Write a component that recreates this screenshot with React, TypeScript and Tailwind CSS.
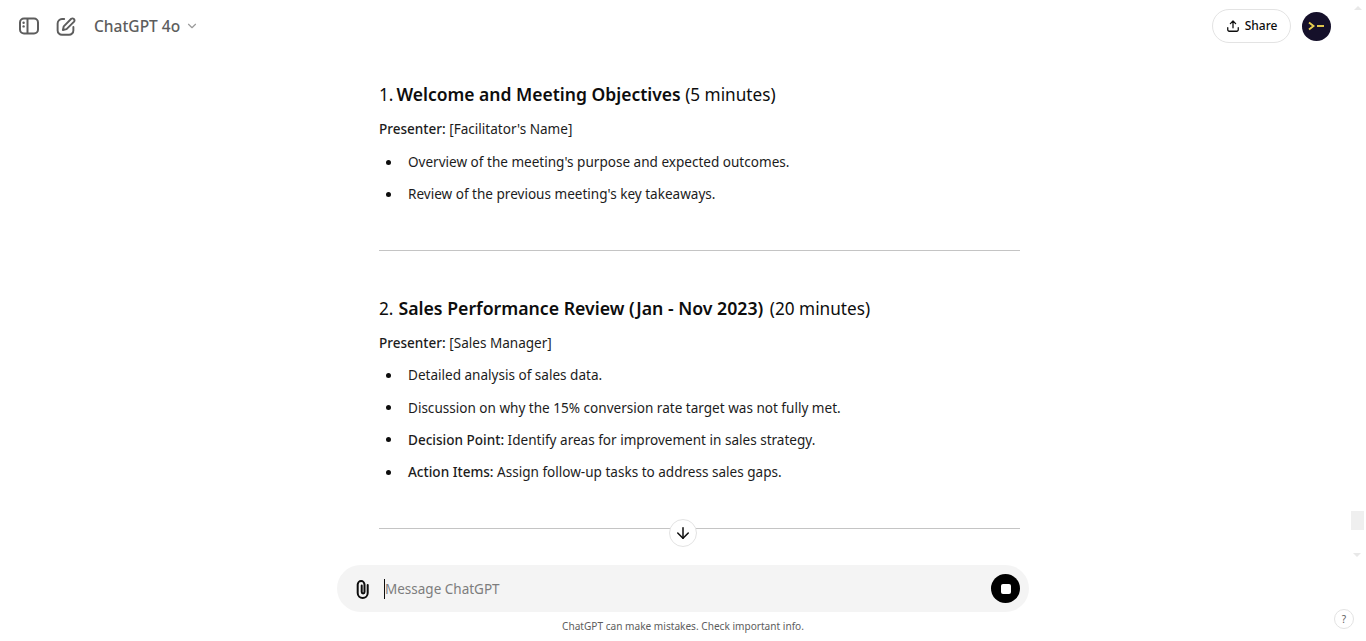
import React from "react";
import { ArrowDown, ChevronDown } from "lucide-react";

const Bullet = ({ children }: { children: React.ReactNode }) => (
  <li className="flex h-[32.3px] items-center">
    <span className="ml-[7px] mr-[17px] h-[5px] w-[5px] rounded-full bg-[#0d0d0d]" />
    <span>{children}</span>
  </li>
);

const SidebarIcon = () => (
  <svg width="24" height="24" viewBox="0 0 24 24" fill="none" stroke="#5d5d5d" strokeWidth="2">
    <rect x="3" y="4.5" width="18" height="15" rx="4" />
    <path d="M10.5 4.5v15" />
    <circle cx="6.6" cy="8.8" r="1.2" fill="#5d5d5d" stroke="none" />
    <circle cx="6.6" cy="12.4" r="1.2" fill="#5d5d5d" stroke="none" />
  </svg>
);

const ComposeIcon = () => (
  <svg width="21" height="21" viewBox="0 0 24 24" fill="none" stroke="#5d5d5d" strokeWidth="2.2" strokeLinecap="round" strokeLinejoin="round">
    <path d="M10.5 3.5H8a5 5 0 0 0-5 5v8a5 5 0 0 0 5 5h8a5 5 0 0 0 5-5v-4" />
    <path d="M18.6 3.2a2.3 2.3 0 0 1 3.2 3.2l-8.6 8.6-4.2 1 1-4.2z" />
  </svg>
);

const ClipIcon = () => (
  <svg width="24" height="24" viewBox="0 0 24 24" fill="none" stroke="#0d0d0d" strokeWidth="2" strokeLinecap="round" strokeLinejoin="round">
    <path d="M10.7 8.5v6.5a1.4 1.4 0 0 0 2.8 0V7.5a3.4 3.4 0 0 0-6.8 0v8.5a5 5 0 0 0 10 0V8" />
  </svg>
);

const ShareIcon = () => (
  <svg width="14" height="14" viewBox="0 0 24 24" fill="none" stroke="#0d0d0d" strokeWidth="2.2" strokeLinecap="round" strokeLinejoin="round">
    <path d="M12 15V3.5M7.5 8 12 3.5 16.5 8" />
    <path d="M3 15v3.5A2.5 2.5 0 0 0 5.5 21h13a2.5 2.5 0 0 0 2.5-2.5V15" />
  </svg>
);

export default function App() {
  return (
    <div className="relative flex h-[641px] flex-col overflow-hidden bg-white font-['Noto_Sans',sans-serif] text-[#0d0d0d]">
      {/* top bar */}
      <header className="flex h-[52px] shrink-0 items-center pl-[17px] pr-[35px]">
        <SidebarIcon />
        <span className="ml-[13.5px]"><ComposeIcon /></span>
        <span className="ml-[18.5px] pt-[1px] text-[15.5px] font-medium text-[#5d5d5d]">ChatGPT 4o</span>
        <ChevronDown size={14} className="ml-[5px] text-[#9b9b9b]" />
        <div className="ml-auto flex items-center gap-[11px]">
          <button className="flex h-[34px] w-[79px] items-center justify-center gap-[5px] rounded-full border border-[#e3e3e3] text-[12px] font-medium">
            <ShareIcon />
            Share
          </button>
          <div className="flex h-[29px] w-[29px] items-center justify-center rounded-full bg-[#15102a]">
            <svg width="17" height="10" viewBox="0 0 17 10" fill="none" stroke="#e8cf50" strokeWidth="1.9">
              <path d="M1 1.5 5.5 5 1 8.5" />
              <path d="M9 5h7" />
            </svg>
          </div>
        </div>
      </header>

      {/* conversation */}
      <main className="min-h-0 flex-1 pl-[379px] text-[13.55px] leading-[22px] text-[#1c1c1c]">
        <div className="w-[641px]">
          <h3 className="mt-[28px] text-[17.2px] leading-[28px] text-[#0d0d0d]">
            1. <strong className="-ml-[1.5px] text-[17.5px] font-semibold">Welcome and Meeting Objectives</strong> (5 minutes)
          </h3>
          <p className="mt-[9px]"><strong className="font-medium">Presenter:</strong> [Facilitator's Name]</p>
          <ul className="mt-[6px]">
            <Bullet>Overview of the meeting's purpose and expected outcomes.</Bullet>
            <Bullet>Review of the previous meeting's key takeaways.</Bullet>
          </ul>
          <hr className="mt-[39.5px] border-[#c4c4c4]" />
          <h3 className="mt-[43px] text-[17.2px] leading-[28px] text-[#0d0d0d]">
            2. <strong className="ml-[0.5px] mr-[2px] text-[17.7px] font-semibold">Sales Performance Review (Jan - Nov 2023)</strong> (20 minutes)
          </h3>
          <p className="mt-[9px]"><strong className="font-medium">Presenter:</strong> [Sales Manager]</p>
          <ul className="mt-[5.1px]">
            <Bullet>Detailed analysis of sales data.</Bullet>
            <Bullet>Discussion on why the 15% conversion rate target was not fully met.</Bullet>
            <Bullet><strong className="font-medium">Decision Point:</strong> Identify areas for improvement in sales strategy.</Bullet>
            <Bullet><strong className="font-medium">Action Items:</strong> Assign follow-up tasks to address sales gaps.</Bullet>
          </ul>
          <hr className="mt-[39.5px] border-[#c4c4c4]" />
        </div>
      </main>

      {/* composer */}
      <div className="flex shrink-0 flex-col items-center">
        <div className="flex h-[47px] w-[692px] items-center rounded-[24px] bg-[#f4f4f4] pl-[14px] pr-[9px]">
          <ClipIcon />
          <span className="ml-[9px] h-[20px] w-px bg-[#0d0d0d]" />
          <span className="pt-[1px] text-[13.5px] text-[#7d7d7d]">Message ChatGPT</span>
          <button className="ml-auto flex h-[29px] w-[29px] items-center justify-center rounded-full bg-black">
            <span className="h-[10px] w-[10px] rounded-[2px] bg-white" />
          </button>
        </div>
        <p className="mb-[7px] mt-[6px] h-[16px] text-[10.1px] leading-[16px] text-[#5d5d5d]">
          ChatGPT can make mistakes. Check important info.
        </p>
      </div>

      {/* overlays */}
      <button className="absolute left-[669px] top-[519px] flex h-[28px] w-[28px] items-center justify-center rounded-full border border-[#e3e3e3] bg-white">
        <ArrowDown size={18} strokeWidth={2} className="text-[#0d0d0d]" />
      </button>
      <button className="absolute left-[1334px] top-[609px] flex h-[20px] w-[20px] items-center justify-center rounded-full border border-[#e3e3e3] bg-white text-[10px] text-[#5d5d5d]">
        ?
      </button>
      <span className="absolute left-[1354px] top-[6px] h-0 w-0 border-x-[4px] border-b-[4px] border-x-transparent border-b-[#e8e8e8]" />
      <span className="absolute left-[1351px] top-[511px] h-[19px] w-[13px] bg-[#efefef]" />
      <span className="absolute left-[1353px] top-[553px] h-0 w-0 border-x-[4px] border-t-[4px] border-x-transparent border-t-[#e8e8e8]" />
    </div>
  );
}
